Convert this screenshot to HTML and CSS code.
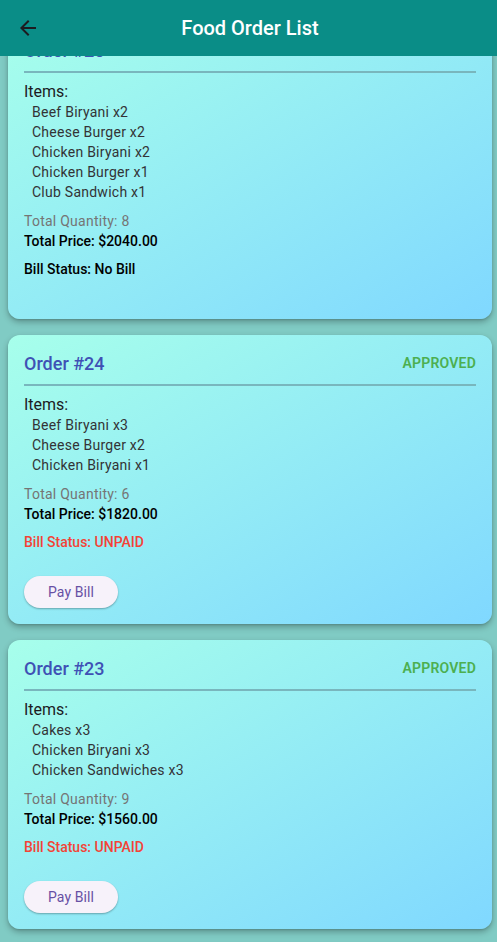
FILE: index.html
```html
<!DOCTYPE html>
<html lang="en">
<head>
<meta charset="utf-8">
<title>Food Order List</title>
<link rel="stylesheet" href="styles.css">
</head>
<body>
<div class="app">
  <header class="appbar">
    <button class="back" aria-label="Back">
      <svg viewBox="0 0 24 24" width="24" height="24"><path d="M20 11H7.83l5.59-5.59L12 4l-8 8 8 8 1.41-1.41L7.83 13H20v-2z" fill="currentColor"/></svg>
    </button>
    <h1 class="title">Food Order List</h1>
    <span class="appbar-spacer"></span>
  </header>
  <main class="list" id="list">
    <section class="card">
      <div class="card-head"><span class="order">Order #25</span><span class="status">APPROVED</span></div>
      <div class="divider"></div>
      <div class="items-label">Items:</div>
      <ul class="items">
        <li>Beef Biryani x2</li>
        <li>Cheese Burger x2</li>
        <li>Chicken Biryani x2</li>
        <li>Chicken Burger x1</li>
        <li>Club Sandwich x1</li>
      </ul>
      <div class="qty">Total Quantity: 8</div>
      <div class="price">Total Price: $2040.00</div>
      <div class="bill">Bill Status: No Bill</div>
    </section>
    <section class="card">
      <div class="card-head"><span class="order">Order #24</span><span class="status">APPROVED</span></div>
      <div class="divider"></div>
      <div class="items-label">Items:</div>
      <ul class="items">
        <li>Beef Biryani x3</li>
        <li>Cheese Burger x2</li>
        <li>Chicken Biryani x1</li>
      </ul>
      <div class="qty">Total Quantity: 6</div>
      <div class="price">Total Price: $1820.00</div>
      <div class="bill unpaid">Bill Status: UNPAID</div>
      <button class="pay">Pay Bill</button>
    </section>
    <section class="card">
      <div class="card-head"><span class="order">Order #23</span><span class="status">APPROVED</span></div>
      <div class="divider"></div>
      <div class="items-label">Items:</div>
      <ul class="items">
        <li>Cakes x3</li>
        <li>Chicken Biryani x3</li>
        <li>Chicken Sandwiches x3</li>
      </ul>
      <div class="qty">Total Quantity: 9</div>
      <div class="price">Total Price: $1560.00</div>
      <div class="bill unpaid">Bill Status: UNPAID</div>
      <button class="pay">Pay Bill</button>
    </section>
    <section class="card">
      <div class="card-head"><span class="order">Order #22</span><span class="status">APPROVED</span></div>
      <div class="divider"></div>
      <div class="items-label">Items:</div>
      <ul class="items">
        <li>Beef Biryani x1</li>
      </ul>
      <div class="qty">Total Quantity: 1</div>
      <div class="price">Total Price: $250.00</div>
      <div class="bill">Bill Status: No Bill</div>
    </section>
  </main>
</div>
<script src="script.js"></script>
</body>
</html>
```

FILE: styles.css
```css
* { box-sizing: border-box; }
html, body { margin: 0; padding: 0; }
body {
  font-family: Roboto, "Noto Sans", sans-serif;
  background: #80cbc4;
  overflow: hidden;
  width: 497px;
  height: 942px;
}
.app {
  display: flex;
  flex-direction: column;
  width: 497px;
  height: 942px;
}
.appbar {
  flex: 0 0 56px;
  height: 56px;
  background: #0a8d87;
  display: flex;
  align-items: center;
  padding: 0 4px;
}
.back {
  width: 48px;
  height: 48px;
  border: 0;
  background: transparent;
  color: #1c1b1f;
  display: flex;
  align-items: center;
  justify-content: center;
  padding: 0;
}
.title {
  flex: 1;
  margin: 0;
  text-align: center;
  color: #ffffff;
  font-size: 20px;
  font-weight: 500;
  line-height: 24px;
  padding-left: 3px;
}
.appbar-spacer { width: 48px; }
.list {
  flex: 1;
  min-height: 0;
  overflow: hidden;
  padding: 8px 5px 8px 8px;
  display: flex;
  flex-direction: column;
  gap: 16px;
}
.card {
  flex: 0 0 auto;
  background: linear-gradient(to bottom right, #a7ffeb, #80d8ff);
  border-radius: 12px;
  box-shadow: 0 3px 6px rgba(0, 0, 0, 0.28), 0 1px 2px rgba(0, 0, 0, 0.12);
  padding: 16px;
  display: flex;
  flex-direction: column;
  align-items: stretch;
}
.card-head {
  height: 24px;
  display: flex;
  justify-content: space-between;
  align-items: center;
}
.order {
  color: #3f51b5;
  font-size: 18px;
  font-weight: 500;
}
.status {
  color: #4caf50;
  font-size: 14px;
  font-weight: 600;
  letter-spacing: 0.2px;
}
.divider {
  height: 2px;
  background: #79b6bd;
  margin: 9px 0;
}
.items-label {
  font-size: 16px;
  line-height: 19px;
  color: #1c1b1f;
}
.items {
  list-style: none;
  margin: 1px 0 0;
  padding: 0 0 0 8px;
}
.items li {
  font-size: 14px;
  line-height: 20px;
  color: #333336;
  letter-spacing: 0.25px;
}
.qty {
  margin-top: 9px;
  font-size: 14px;
  line-height: 20px;
  color: #757575;
  letter-spacing: 0.25px;
}
.price {
  font-size: 14px;
  line-height: 20px;
  font-weight: 500;
  color: #000000;
}
.bill {
  margin-top: 8px;
  margin-bottom: 24px;
  font-size: 14px;
  line-height: 20px;
  font-weight: 500;
  color: #000000;
}
.bill.unpaid { color: #f44336; }
.pay {
  align-self: flex-start;
  height: 32px;
  padding: 0 24px;
  border: 0;
  border-radius: 16px;
  background: #f7f2fa;
  color: #6750a4;
  font-family: Roboto, "Noto Sans", sans-serif;
  font-size: 14px;
  font-weight: 400;
  letter-spacing: 0.1px;
  box-shadow: 0 1px 2px rgba(0, 0, 0, 0.3);
}
```

FILE: script.js
```js
document.getElementById('list').scrollTop = 42;
```
